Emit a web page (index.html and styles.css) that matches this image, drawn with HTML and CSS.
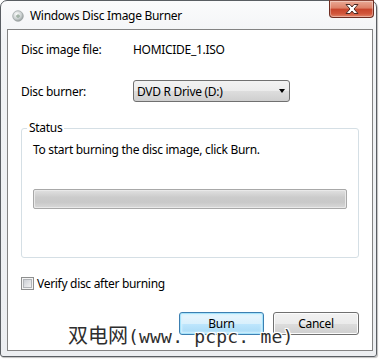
FILE: index.html
```html
<!DOCTYPE html>
<html>
<head>
<meta charset="utf-8">
<link rel="stylesheet" href="styles.css">
</head>
<body>
<div class="window">
  <div class="titlebar">
    <svg class="app-icon" width="12" height="12" viewBox="0 0 12 12">
      <defs>
        <radialGradient id="disc" cx="40%" cy="35%" r="70%">
          <stop offset="0" stop-color="#ffffff"/>
          <stop offset="0.6" stop-color="#c9cfcf"/>
          <stop offset="1" stop-color="#8e9595"/>
        </radialGradient>
      </defs>
      <circle cx="6" cy="6" r="5.3" fill="url(#disc)" stroke="#9aa0a0" stroke-width="0.7"/>
      <circle cx="6" cy="6" r="1.6" fill="#6f8a76"/>
      <circle cx="6" cy="6" r="0.7" fill="#ffffff"/>
    </svg>
    <span class="title">Windows Disc Image Burner</span>
    <div class="close-btn">
      <svg width="18" height="12" viewBox="0 0 18 12">
        <path d="M3 1.5 H7 L9 4 L11 1.5 H15 L11 6 L15 10.5 H11 L9 8 L7 10.5 H3 L7 6 Z" fill="#ffffff" stroke="#4a2a24" stroke-width="1" stroke-linejoin="round"/>
      </svg>
    </div>
  </div>
  <div class="client">
    <div class="row row-file">
      <span class="label">Disc image file:</span>
      <span class="value">HOMICIDE_1.ISO</span>
    </div>
    <div class="row row-burner">
      <span class="label">Disc burner:</span>
      <div class="combo">
        <span class="combo-text">DVD R Drive (D:)</span>
        <span class="combo-arrow"></span>
      </div>
    </div>
    <fieldset class="status">
      <legend class="status-legend">Status</legend>
      <p class="status-msg">To start burning the disc image, click Burn.</p>
      <div class="progress"><div class="progress-track"></div></div>
    </fieldset>
    <label class="verify">
      <span class="checkbox"></span>
      <span class="verify-text">Verify disc after burning</span>
    </label>
    <div class="buttons">
      <div class="btn btn-default">Burn</div>
      <div class="btn">Cancel</div>
    </div>
    <div class="watermark"><span class="wm-cjk">双电网</span><span class="wm-latin">(www. pcpc. me)</span></div>
  </div>
</div>
</body>
</html>
```

FILE: styles.css
```css
html, body {
  margin: 0;
  padding: 0;
  background: #ffffff;
}
body {
  width: 379px;
  height: 359px;
  overflow: hidden;
  font-family: "Noto Sans", "Open Sans", sans-serif;
  font-size: 12px;
  letter-spacing: -0.3px;
  color: #000;
}
.window {
  position: relative;
  box-sizing: border-box;
  width: 377px;
  height: 357px;
  border: 1px solid #5a5e63;
  border-radius: 7px 7px 3px 3px;
  padding: 0 3px 5px 6px;
  background: linear-gradient(#fbfbfc, #f1f3f5 40px, #eceef1);
  box-shadow: 1px 1px 1px rgba(0,0,0,0.25);
}
.titlebar {
  height: 28px;
  display: flex;
  align-items: flex-start;
}
.app-icon {
  margin: 9px 0 0 5px;
  flex: none;
}
.title {
  margin: 6px 0 0 6px;
  font-size: 12px;
  letter-spacing: -0.3px;
  line-height: 18px;
  color: #000;
  text-shadow: 0 0 6px #fff, 0 0 6px #fff;
}
.close-btn {
  margin-left: auto;
  margin-right: -1px;
  margin-top: -1px;
  width: 45px;
  height: 18px;
  box-sizing: border-box;
  border: 1px solid #6e2d22;
  border-top-color: #8a4538;
  border-radius: 0 0 4px 4px;
  background: linear-gradient(#e9a995, #dd7f66 45%, #c7442b 50%, #d2573c 80%, #e2866b);
  display: flex;
  align-items: center;
  justify-content: center;
  box-shadow: inset 0 0 0 1px rgba(255,255,255,0.35);
}
.client {
  position: relative;
  box-sizing: border-box;
  height: 322px;
  border: 1px solid #838383;
  background: #fff;
  padding: 9px 13px 0 13px;
}
.row {
  display: flex;
  align-items: center;
}
.label {
  width: 112px;
  flex: none;
}
.row-file {
  height: 20px;
}
.row-burner {
  margin-top: 21px;
  height: 22px;
}
.combo {
  box-sizing: border-box;
  width: 157px;
  height: 22px;
  border: 1px solid #707070;
  border-radius: 3px;
  background: linear-gradient(#f2f2f2, #ebebeb 50%, #dddddd 51%, #cfcfcf);
  display: flex;
  align-items: center;
  padding: 0 4px 0 3px;
}
.combo-text {
  flex: 1;
}
.combo-arrow {
  width: 0;
  height: 0;
  border-left: 3.5px solid transparent;
  border-right: 3.5px solid transparent;
  border-top: 4px solid #000;
}
.status {
  margin: 19px 0 0 0;
  padding: 0 11px 0 11px;
  height: 137px;
  box-sizing: border-box;
  border: 1px solid #d5dfe5;
  border-radius: 3px;
}
.status-legend {
  padding: 0 2px;
  margin-left: -6px;
  line-height: 14px;
}
.status-msg {
  margin: 7px 0 0 0;
  line-height: 16px;
}
.progress {
  margin-top: 31px;
  box-sizing: border-box;
  height: 20px;
  border: 1px solid #a8a8a8;
  border-radius: 2px;
  background: #e9e9e9;
  padding: 1px;
}
.progress-track {
  height: 100%;
  border-radius: 1px;
  background: linear-gradient(#dedede, #cbcbcb 40%, #c9c9c9 70%, #d6d6d6);
}
.verify {
  display: flex;
  align-items: center;
  margin-top: 19px;
  height: 13px;
}
.checkbox {
  box-sizing: border-box;
  width: 13px;
  height: 13px;
  border: 1px solid #8e8f8f;
  background: #f4f4f4;
  flex: none;
}
.checkbox::after {
  content: "";
  display: block;
  width: 9px;
  height: 9px;
  background: linear-gradient(135deg, #cbcfd5, #f2f2f2);
  border: 1px solid #b2b5b9;
  box-sizing: border-box;
  margin: 1px;
}
.verify-text {
  margin-left: 3px;
}
.buttons {
  display: flex;
  justify-content: flex-end;
  gap: 9px;
  margin-top: 22px;
}
.btn {
  box-sizing: border-box;
  width: 86px;
  height: 23px;
  border: 1px solid #707070;
  border-radius: 3px;
  background: linear-gradient(#f2f2f2, #ebebeb 50%, #dddddd 51%, #cfcfcf);
  box-shadow: inset 0 0 0 1px #fcfcfc;
  display: flex;
  align-items: center;
  justify-content: center;
}
.btn-default {
  width: 85px;
  border-color: #3c7fb1;
  background: linear-gradient(#eaf6fd, #d9f0fc 50%, #bee6fd 51%, #a7d9f5);
  box-shadow: inset 0 0 0 1px #a6e3fb, inset 0 0 2px 2px #d6f1fd;
}
.watermark {
  position: absolute;
  left: 60px;
  top: 294px;
  line-height: 22px;
  color: #2e2e2e;
  white-space: nowrap;
  letter-spacing: 0;
  text-shadow: 1px 0 0 #fff, -1px 0 0 #fff, 0 1px 0 #fff, 0 -1px 0 #fff, 1px 1px 0 #fff, -1px -1px 0 #fff, 1px -1px 0 #fff, -1px 1px 0 #fff, 0 0 3px #fff;
}
.wm-cjk {
  font-family: "Noto Sans CJK SC", sans-serif;
  font-size: 20px;
}
.wm-latin {
  font-family: "DejaVu Sans Mono", monospace;
  font-size: 18px;
  letter-spacing: 0.2px;
}
```
